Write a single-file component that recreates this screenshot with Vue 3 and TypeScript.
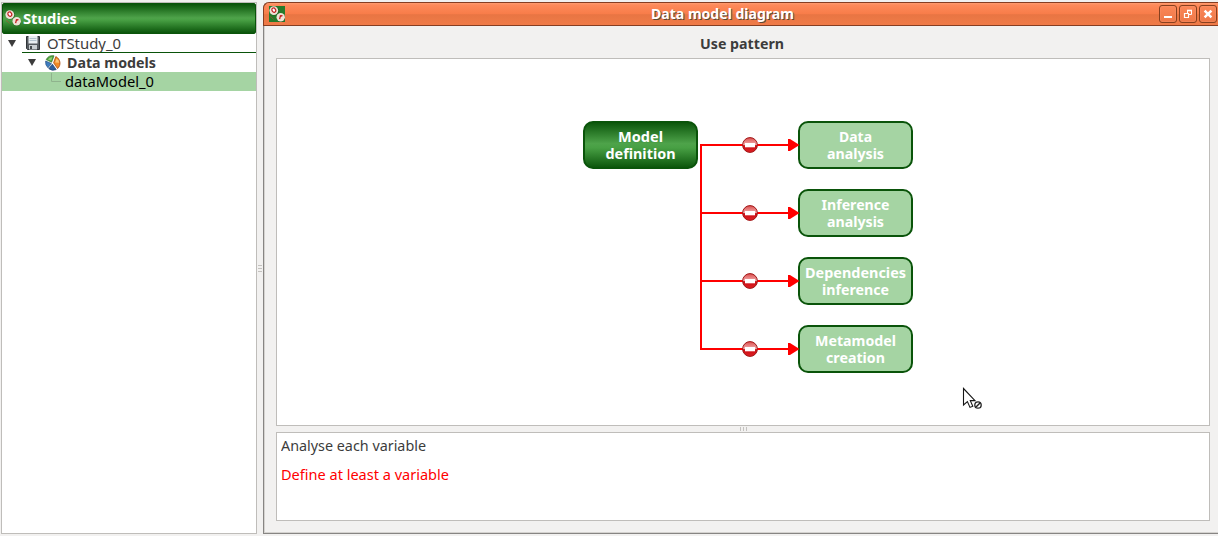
<script setup lang="ts">
interface Step {
  y: number
  lines: { text: string; width: number }[]
}

const steps: Step[] = [
  { y: 121, lines: [{ text: 'Data', width: 33 }, { text: 'analysis', width: 57 }] },
  { y: 189, lines: [{ text: 'Inference', width: 68 }, { text: 'analysis', width: 57 }] },
  { y: 257, lines: [{ text: 'Dependencies', width: 101 }, { text: 'inference', width: 67 }] },
  { y: 325, lines: [{ text: 'Metamodel', width: 81 }, { text: 'creation', width: 59 }] },
]
</script>

<template>
  <div class="app">
    <svg width="0" height="0" class="defs">
      <defs>
        <symbol id="logo" viewBox="0 0 16 16">
          <circle cx="5.4" cy="5" r="4.6" fill="#163f16" opacity=".5" />
          <circle cx="4.8" cy="4.6" r="4.4" fill="#eee2d6" />
          <ellipse cx="4.8" cy="4.1" rx="1.8" ry="2.2" transform="rotate(-35 4.8 4.1)" fill="#fff" stroke="#c32222" stroke-width="1.2" />
          <circle cx="12" cy="12" r="4" fill="#163f16" opacity=".5" />
          <circle cx="11.7" cy="11.2" r="4.2" fill="#eee2d6" />
          <path d="M10.6 13.2L11.6 9.2M11.3 10.6q.9-1.4 2.2-.6" stroke="#c32222" stroke-width="1.3" fill="none" />
          <path d="M1 10.5q2 .8 3.5 3" stroke="#b44a32" stroke-width="1" fill="none" opacity=".6" />
        </symbol>
      </defs>
    </svg>

    <aside class="studies">
      <header class="studies-head">
        <svg class="head-icon" width="16" height="16"><use href="#logo" /></svg>
        <svg class="label" width="60" height="20"><text x="0" y="15" textLength="54" lengthAdjust="spacingAndGlyphs" class="bold white">Studies</text></svg>
      </header>
      <div class="row study">
        <svg class="arrow" width="8" height="7"><path d="M0 0H8L4 7Z" fill="#3c3c3c" /></svg>
        <svg class="disk" width="14" height="14">
          <path d="M.5 .5H13.5V13.5H1.5L.5 12.5Z" fill="#565b60" stroke="#303438" />
          <rect x="2.5" y="0" width="9" height="7.5" fill="#e9eef1" />
          <path d="M3.5 2.5h7M3.5 4.5h7" stroke="#b3c3ce" stroke-width="1" />
          <rect x="3" y="9" width="8" height="4.5" fill="#c9ced1" />
          <rect x="4" y="10" width="2" height="3" fill="#43484c" />
        </svg>
        <svg class="label" width="80" height="18"><text x="0" y="14" textLength="74" lengthAdjust="spacingAndGlyphs" class="gray">OTStudy_0</text></svg>
      </div>
      <div class="row models">
        <svg class="arrow" width="8" height="7"><path d="M0 0H8L4 7Z" fill="#3c3c3c" /></svg>
        <svg class="pie" width="16" height="16">
          <path d="M6.6 7.2L1.2 4.6A7.3 7.3 0 0 1 9 .8Z" fill="#4fa33c" stroke="#2f6f28" stroke-width=".7" />
          <path d="M2.8 4.4A6 6 0 0 1 7.4 2L6.2 5.6Z" fill="#91cf78" />
          <path d="M6.4 8.6L.7 6A7.3 7.3 0 0 0 3 12.8Z" fill="#3e7dc0" stroke="#234f83" stroke-width=".7" />
          <path d="M7.4 9.2L3.8 13.7A7.2 7.2 0 0 0 11.2 14.6Z" fill="#2b5d9c" stroke="#1d3f70" stroke-width=".7" />
          <path d="M8.6 7.8L10.8 1.6A7.3 7.3 0 0 1 12.6 13.6Z" fill="#f08a25" stroke="#a84b12" stroke-width=".8" />
          <path d="M10.2 7.4L11.5 3.4A5.4 5.4 0 0 1 14.2 7.8Z" fill="#fbc274" />
        </svg>
        <svg class="label" width="94" height="18"><text x="0" y="14" textLength="89" lengthAdjust="spacingAndGlyphs" class="bold gray">Data models</text></svg>
      </div>
      <div class="row selected">
        <svg class="branch" width="11" height="9"><path d="M.5 0V8.5H10" stroke="#8fb38d" fill="none" /></svg>
        <svg class="label" width="94" height="18"><text x="0" y="14" textLength="89" lengthAdjust="spacingAndGlyphs" class="black">dataModel_0</text></svg>
      </div>
    </aside>

    <div class="grip-v"><i></i><i></i><i></i></div>

    <main class="window">
      <header class="titlebar">
        <div class="title-icon"><svg width="16" height="16"><use href="#logo" /></svg></div>
        <svg class="title" width="150" height="22">
          <text x="2" y="17" textLength="143" lengthAdjust="spacingAndGlyphs" class="bold shadow">Data model diagram</text>
          <text x="1" y="16" textLength="143" lengthAdjust="spacingAndGlyphs" class="bold white">Data model diagram</text>
        </svg>
        <div class="controls">
          <span class="control"><svg width="16" height="16"><path d="M4 11h8" stroke="#fff" stroke-width="2" /></svg></span>
          <span class="control"><svg width="16" height="16" fill="none" stroke="#fff"><path d="M7.5 4.5h4v4h-4z" stroke-width="1" /><path d="M7 4.5h5" stroke-width="1.6" /><path d="M4.5 7.5h4v4h-4z" fill="#f07a48" stroke-width="1.2" /></svg></span>
          <span class="control"><svg width="16" height="16"><path d="M4.6 4.6l6.8 6.8M11.4 4.6l-6.8 6.8" stroke="#fff" stroke-width="2.5" /></svg></span>
        </div>
      </header>

      <div class="content">
        <div class="caption">
          <svg width="86" height="20"><text x="0" y="15" textLength="84" lengthAdjust="spacingAndGlyphs" class="bold gray">Use pattern</text></svg>
        </div>
        <section class="canvas">
          <svg width="932" height="366" viewBox="277 59 932 366">
            <defs>
              <linearGradient id="active" x1="0" y1="0" x2="0" y2="1">
                <stop offset="0" stop-color="#0a540a" />
                <stop offset=".47" stop-color="#4ea34a" />
                <stop offset=".56" stop-color="#48a044" />
                <stop offset="1" stop-color="#0a540a" />
              </linearGradient>
              <linearGradient id="stop" x1="0" y1="0" x2="0" y2="1">
                <stop offset="0" stop-color="#dc4c4c" />
                <stop offset=".5" stop-color="#f2b0b0" />
                <stop offset=".54" stop-color="#c90c12" />
                <stop offset="1" stop-color="#e02025" />
              </linearGradient>
            </defs>
            <rect x="584" y="122" width="113" height="46" rx="9" fill="url(#active)" stroke="#0a540a" stroke-width="2" />
            <text x="618" y="142" textLength="45" lengthAdjust="spacingAndGlyphs" class="bold white">Model</text>
            <text x="605.5" y="159" textLength="70" lengthAdjust="spacingAndGlyphs" class="bold white">definition</text>
            <path d="M701 144V350" stroke="red" stroke-width="2" />
            <g v-for="step in steps" :key="step.y">
              <rect x="799" :y="step.y + 1" width="113" height="46" rx="9" fill="#a5d4a3" stroke="#0a540a" stroke-width="2" />
              <text
                v-for="(line, i) in step.lines"
                :key="i"
                :x="855.5 - line.width / 2"
                :y="step.y + 21 + i * 17"
                :textLength="line.width"
                lengthAdjust="spacingAndGlyphs"
                class="bold white"
              >{{ line.text }}</text>
              <path :d="`M701 ${step.y + 24}H789`" stroke="red" stroke-width="2" />
              <path :d="`M788 ${step.y + 18}h2l9.5 6l-9.5 6h-2z`" fill="red" />
              <circle cx="750" :cy="step.y + 24" r="7.4" fill="url(#stop)" stroke="#a01818" stroke-width="1" />
              <rect x="745" :y="step.y + 22" width="10" height="4.3" fill="#fff" />
            </g>
            <g>
              <path d="M963.5 388.5V405L967.4 401.6L970 407.4L972.8 406.2L970.3 400.6H975Z" fill="#fff" stroke="#161616" stroke-width="1.1" />
              <circle cx="978" cy="405" r="3.2" fill="#fff" stroke="#222" stroke-width="1.3" />
              <path d="M976 407l4-4" stroke="#222" stroke-width="1.5" />
            </g>
          </svg>
        </section>
        <div class="grip-h"><i></i><i></i><i></i></div>
        <section class="messages">
          <svg width="200" height="22"><text x="0" y="18" textLength="145" lengthAdjust="spacingAndGlyphs" class="gray">Analyse each variable</text></svg>
          <svg class="error" width="200" height="22"><text x="0" y="18" textLength="168" lengthAdjust="spacingAndGlyphs" class="red">Define at least a variable</text></svg>
        </section>
      </div>
    </main>
  </div>
</template>

<style>
html, body { margin: 0; background: #f2f1f0; }
</style>

<style scoped>
.app { display: flex; width: 1218px; height: 536px; overflow: hidden; background: #f2f1f0; font-family: "Noto Sans", "Open Sans", sans-serif; }
svg { display: block; flex: none; }
.defs { position: absolute; }
text { font: 14.2px "Noto Sans", "Open Sans", sans-serif; }
.bold { font-weight: 700; }
.white { fill: #fff; }
.gray { fill: #3c3c3c; }
.black { fill: #000; }
.red { fill: #f00; }
.shadow { fill: #5d4936; }

.studies { box-sizing: border-box; width: 256px; height: 532px; margin: 2px 0 0 1px; border: 1px solid #bfbdba; background: #fff; flex: none; }
.studies-head { box-sizing: border-box; height: 31px; display: flex; align-items: center; border: 1px solid #0a540a; border-radius: 2px; background: linear-gradient(#0a540a, #4ea34a 48%, #48a044 55%, #0a540a); }
.head-icon { margin: -2px 0 0 2px; }
.studies-head .label { margin-left: 2px; }
.row { display: flex; align-items: center; height: 19px; position: relative; }
.study .arrow { margin-left: 6px; }
.study .disk { margin: 0 0 2px 10px; }
.study .label { margin: 0 0 0 7px; }
.study::after { content: ""; position: absolute; left: 20px; right: 0; bottom: 0; height: 1px; background: #0a540a; }
.models .arrow { margin-left: 26px; }
.models .pie { margin-left: 9px; }
.models .label { margin-left: 6px; }
.selected { background: #a5d4a3; }
.branch { margin: -9px 0 0 49px; }
.selected .label { margin-left: 3px; }

.grip-v { width: 6px; height: 536px; flex: none; display: flex; flex-direction: column; align-items: center; justify-content: center; gap: 2px; }
.grip-v i { width: 4px; height: 1px; background: #c4c2bf; }

.window { box-sizing: border-box; flex: 1; height: 532px; margin-top: 2px; border-left: 1px solid #878583; border-bottom: 1px solid #878583; box-shadow: inset 1px -1px #d5d3d0; border-top-left-radius: 6px; }
.titlebar { box-sizing: border-box; height: 24px; margin-left: -1px; display: flex; align-items: center; border: solid #863e22; border-width: 1px 0 1px 1px; border-top-left-radius: 6px; background: linear-gradient(#ff9c70 0, #fd8a5a 2px, #f87c49 50%, #e87543 53%, #f07b48 100%); }
.title-icon { width: 16px; height: 16px; margin: 0 0 1px 5px; background: #257a2a; }
.title { margin-left: 365px; }
.controls { display: flex; gap: 2px; margin: 0 1px 0 auto; }
.control { box-sizing: border-box; width: 18px; height: 18px; border: 1px solid #87401f; border-radius: 3px; background: linear-gradient(#fb8758, #ee7848); box-shadow: inset 0 0 0 1px #ff9f7744; }

.content { padding: 0 8px 0 12px; }
.caption { height: 32px; display: flex; align-items: center; justify-content: center; }
.caption svg { margin-top: 4px; }
.canvas, .messages { box-sizing: border-box; border: 1px solid #bfbdba; background: #fff; }
.canvas { height: 368px; }
.canvas svg { overflow: hidden; }
.grip-h { height: 6px; display: flex; align-items: center; justify-content: center; gap: 2px; }
.grip-h i { width: 1px; height: 4px; background: #c4c2bf; }
.messages { height: 89px; padding-left: 4px; }
.error { margin-top: 7px; }
</style>
